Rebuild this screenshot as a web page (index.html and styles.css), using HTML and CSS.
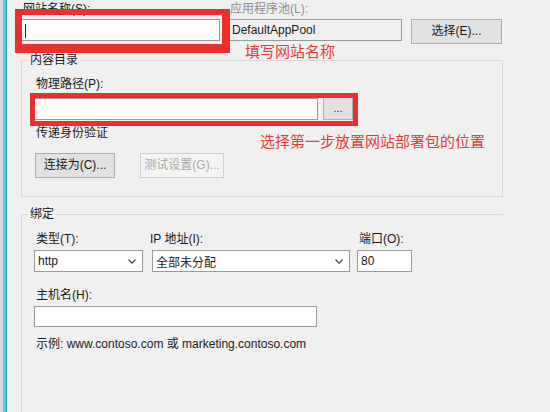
FILE: index.html
```html
<!DOCTYPE html>
<html lang="zh-CN">
<head>
<meta charset="utf-8">
<title>添加网站</title>
<link rel="stylesheet" href="styles.css">
</head>
<body>
<div class="window">
  <div class="edge"></div>
  <main class="content">
    <div class="top-row">
      <div class="field site-col">
        <label class="lbl">网站名称(S):</label>
        <div class="textbox site-input"><span class="caret"></span></div>
      </div>
      <div class="field pool-col">
        <label class="lbl muted">应用程序池(L):</label>
        <div class="textbox readonly pool-input">DefaultAppPool</div>
      </div>
      <button class="btn select-btn">选择(E)...</button>
    </div>

    <fieldset class="group content-dir">
      <legend>内容目录</legend>
      <label class="lbl">物理路径(P):</label>
      <div class="path-row">
        <div class="textbox path-input"></div>
        <button class="btn browse">...</button>
      </div>
      <div class="lbl pass">传递身份验证</div>
      <div class="btn-row">
        <button class="btn connect">连接为(C)...</button>
        <button class="btn disabled">测试设置(G)...</button>
      </div>
    </fieldset>

    <fieldset class="group binding">
      <legend>绑定</legend>
      <div class="bind-row">
        <div class="field type-col">
          <label class="lbl">类型(T):</label>
          <div class="select"><span>http</span><svg class="chev" width="8" height="5" viewBox="0 0 8 5"><polyline points="0.5,0.5 4,4.2 7.5,0.5" fill="none" stroke="#444" stroke-width="1.2"/></svg></div>
        </div>
        <div class="field ip-col">
          <label class="lbl">IP 地址(I):</label>
          <div class="select"><span>全部未分配</span><svg class="chev" width="8" height="5" viewBox="0 0 8 5"><polyline points="0.5,0.5 4,4.2 7.5,0.5" fill="none" stroke="#444" stroke-width="1.2"/></svg></div>
        </div>
        <div class="field port-col">
          <label class="lbl">端口(O):</label>
          <div class="textbox port-input">80</div>
        </div>
      </div>
      <label class="lbl host-lbl">主机名(H):</label>
      <div class="textbox host-input"></div>
      <div class="lbl example">示例: www.contoso.com 或 marketing.contoso.com</div>
    </fieldset>
  </main>

  <div class="mark mark-name"></div>
  <div class="note note-name">填写网站名称</div>
  <div class="mark mark-path"></div>
  <div class="note note-path">选择第一步放置网站部署包的位置</div>
</div>
</body>
</html>
```

FILE: styles.css
```css
* { box-sizing: border-box; }

html, body {
  margin: 0;
  padding: 0;
  background: #f0f0f0;
  overflow: hidden;
}

body {
  font-family: "Liberation Sans", "Noto Sans CJK SC", sans-serif;
  font-size: 12px;
  color: #1a1a1a;
}

.window {
  position: relative;
  display: flex;
  width: 550px;
  height: 412px;
  background: #f0f0f0;
  overflow: hidden;
}

.edge {
  width: 8px;
  flex: none;
  background: linear-gradient(to right,
    #d4dbe0 0, #d4dbe0 3px,
    #5ec5ee 3px, #5ec5ee 6px,
    #3b9ccb 6px, #3b9ccb 7px,
    #fafafa 7px, #fafafa 8px);
}

.content {
  flex: 1;
  padding: 1px 0 0 13px;
}

.lbl {
  display: block;
  line-height: 16px;
  white-space: nowrap;
}

.muted { color: #8c8c8c; }

.field {
  display: flex;
  flex-direction: column;
}

/* top row */
.top-row {
  display: flex;
  align-items: flex-start;
  height: 43px;
}

.site-col { width: 199px; }
.site-col .lbl { padding-left: 2px; }

.pool-col { width: 174px; margin-left: 8px; }
.pool-col .lbl { padding-left: 2px; }

.textbox {
  height: 22px;
  border: 1px solid #9a9a9a;
  background: #fff;
  line-height: 20px;
  padding: 0 3px;
  white-space: nowrap;
}

.textbox.readonly { background: #f0f0f0; }

.site-input, .pool-input { margin-top: 2px; }

.caret {
  display: inline-block;
  width: 1px;
  height: 14px;
  background: #222;
  vertical-align: middle;
  margin-left: 0;
}

.btn {
  font: inherit;
  color: #1a1a1a;
  background: #e1e1e1;
  border: 1px solid #adadad;
  padding: 0;
  height: 25px;
  line-height: 23px;
  text-align: center;
  border-radius: 0;
}

.select-btn {
  width: 91px;
  margin-left: 9px;
  margin-top: 18px;
}

/* group boxes */
.group {
  margin: 0;
  border: 1px solid #d9d9d9;
  width: 482px;
  min-inline-size: 0;
}

.group legend {
  padding: 0 2px;
  margin-left: -6px;
  line-height: 14px;
}

.content-dir {
  margin-top: 9px;
  padding: 9px 0 18px 12px;
}

.path-row {
  display: flex;
  align-items: center;
  margin-top: 5px;
  height: 23px;
}

.path-input { width: 284px; }

.browse {
  width: 30px;
  height: 23px;
  line-height: 19px;
  margin-left: 5px;
  font-size: 11px;
}

.pass { margin-top: 5px; padding-left: 2px; }
.content-dir > .lbl { padding-left: 2px; }

.btn-row {
  display: flex;
  margin-top: 12px;
}

.connect { width: 80px; margin-left: 1px; }

.btn.disabled {
  width: 84px;
  margin-left: 25px;
  background: #f4f4f4;
  border-color: #cfcfcf;
  color: #a8a8a8;
}

.binding {
  margin-top: 10px;
  padding: 10px 0 80px 12px;
  border-right: none;
  border-bottom: none;
}

.bind-row {
  display: flex;
}

.bind-row .lbl { padding-left: 2px; }

.type-col { width: 109px; }
.ip-col { width: 198px; margin-left: 9px; }
.ip-col .lbl { padding-left: 0; margin-left: -2px; }
.port-col { width: 55px; margin-left: 7px; }

.select {
  margin-top: 3px;
  height: 22px;
  border: 1px solid #9a9a9a;
  background: #fff;
  display: flex;
  align-items: center;
  justify-content: space-between;
  padding: 0 6px 0 3px;
}

.chev { display: block; }

.port-input { margin-top: 3px; }

.host-lbl { margin-top: 15px; padding-left: 2px; }

.host-input {
  margin-top: 3px;
  width: 283px;
  height: 21px;
}

.example { margin-top: 9px; padding-left: 2px; }

/* red annotations */
.mark {
  position: absolute;
  border-style: solid;
  border-color: #e8302f;
}

.mark-name {
  left: 15px;
  top: 9px;
  width: 215px;
  height: 44px;
  border-width: 6px 8px 9px 7px;
}

.mark-path {
  left: 30px;
  top: 93px;
  width: 328px;
  height: 33px;
  border-width: 5px;
}

.note {
  position: absolute;
  color: #e63a3c;
  font-family: "Noto Sans CJK SC", sans-serif;
  font-size: 15px;
  line-height: 18px;
  white-space: nowrap;
}

.note-name { left: 245px; top: 42px; }
.note-path { left: 260px; top: 132px; }
```
